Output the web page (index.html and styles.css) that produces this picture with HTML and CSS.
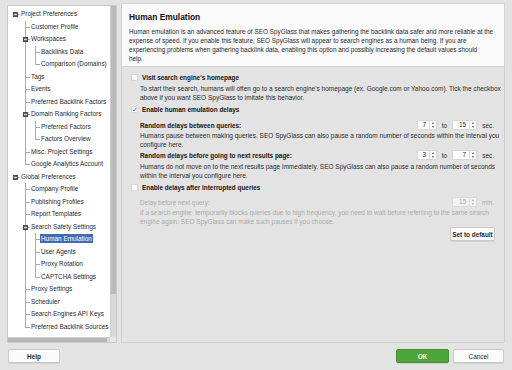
FILE: index.html
```html
<!DOCTYPE html>
<html>
<head>
  <meta charset="utf-8">
  <title>Preferences - Human Emulation</title>
  <link rel="stylesheet" href="styles.css">
</head>
<body>
  <div class="dialog">
    <div class="main">
      <div class="tree-panel">
        <div class="tree">
          <ul>
            <li><span class="exp"></span><div class="row">Project Preferences</div>
              <ul>
                <li><div class="row">Customer Profile</div></li>
                <li><span class="exp"></span><div class="row">Workspaces</div>
                  <ul>
                    <li><div class="row">Backlinks Data</div></li>
                    <li><div class="row">Comparison (Domains)</div></li>
                  </ul>
                </li>
                <li><div class="row">Tags</div></li>
                <li><div class="row">Events</div></li>
                <li><div class="row">Preferred Backlink Factors</div></li>
                <li><span class="exp"></span><div class="row">Domain Ranking Factors</div>
                  <ul>
                    <li><div class="row">Preferred Factors</div></li>
                    <li><div class="row">Factors Overview</div></li>
                  </ul>
                </li>
                <li><div class="row">Misc. Project Settings</div></li>
                <li><div class="row">Google Analytics Account</div></li>
              </ul>
            </li>
            <li><span class="exp"></span><div class="row">Global Preferences</div>
              <ul>
                <li><div class="row">Company Profile</div></li>
                <li><div class="row">Publishing Profiles</div></li>
                <li><div class="row">Report Templates</div></li>
                <li><span class="exp"></span><div class="row">Search Safety Settings</div>
                  <ul>
                    <li><div class="row"><span class="selected">Human Emulation</span></div></li>
                    <li><div class="row">User Agents</div></li>
                    <li><div class="row">Proxy Rotation</div></li>
                    <li><div class="row">CAPTCHA Settings</div></li>
                  </ul>
                </li>
                <li><div class="row">Proxy Settings</div></li>
                <li><div class="row">Scheduler</div></li>
                <li><div class="row">Search Engines API Keys</div></li>
                <li><div class="row">Preferred Backlink Sources</div></li>
              </ul>
            </li>
          </ul>
        </div>
        <div class="vscroll"><div class="thumb"></div></div>
        <div class="hscroll"><div class="thumb"></div></div>
        <div class="corner"></div>
      </div>

      <div class="page">
        <div class="page-header">
          <h1>Human Emulation</h1>
          <p>Human emulation is an advanced feature of SEO SpyGlass that makes gathering the backlink data safer and more reliable at the<br>
          expense of speed. If you enable this feature, SEO SpyGlass will appear to search engines as a human being. If you are<br>
          experiencing problems when gathering backlink data, enabling this option and possibly increasing the default values should<br>
          help.</p>
        </div>
        <div class="page-body">
          <label class="check"><span class="box"></span>Visit search engine's homepage</label>
          <p class="hint hint-1">To start their search, humans will often go to a search engine's homepage (ex. Google.com or Yahoo.com). Tick the checkbox<br>
          above if you want SEO SpyGlass to imitate this behavior.</p>

          <label class="check check-2"><span class="box checked"><svg width="7" height="7" viewBox="0 0 7 7"><path d="M1 3.6 L2.8 5.4 L6.2 1.2" fill="none" stroke="#3c6db4" stroke-width="1.3"/></svg></span>Enable human emulation delays</label>

          <div class="setting setting-1">
            <span class="setting-label">Random delays between queries:</span>
            <span class="spin spin-sm"><span class="val">7</span><span class="arrows"><i class="up"></i><i class="down"></i></span></span>
            <span class="to">to</span>
            <span class="spin"><span class="val">15</span><span class="arrows"><i class="up"></i><i class="down"></i></span></span>
            <span class="unit">sec.</span>
          </div>
          <p class="hint hint-2">Humans pause between making queries. SEO SpyGlass can also pause a random number of seconds within the interval you<br>
          configure here.</p>

          <div class="setting setting-2">
            <span class="setting-label">Random delays before going to next results page:</span>
            <span class="spin spin-sm"><span class="val">3</span><span class="arrows"><i class="up"></i><i class="down"></i></span></span>
            <span class="to">to</span>
            <span class="spin"><span class="val">7</span><span class="arrows"><i class="up"></i><i class="down"></i></span></span>
            <span class="unit">sec.</span>
          </div>
          <p class="hint hint-3">Humans do not move on to the next results page immediately. SEO SpyGlass can also pause a random number of seconds<br>
          within the interval you configure here.</p>

          <label class="check check-3"><span class="box"></span>Enable delays after interrupted queries</label>

          <div class="setting setting-3 disabled">
            <span class="setting-label">Delay before next query:</span>
            <span class="spin"><span class="val">15</span><span class="arrows"><i class="up"></i><i class="down"></i></span></span>
            <span class="unit">min.</span>
          </div>
          <p class="hint hint-4 disabled">If a search engine &nbsp;temporarily blocks queries due to high frequency, you need to wait before referring to the same search<br>
          engine again. SEO SpyGlass can make such pauses if you choose.</p>

          <div class="actions">
            <button class="btn btn-default">Set to default</button>
          </div>
        </div>
      </div>
    </div>

    <div class="footer">
      <button class="btn btn-help">Help</button>
      <button class="btn btn-ok">OK</button>
      <button class="btn btn-cancel">Cancel</button>
    </div>
  </div>
</body>
</html>
```

FILE: styles.css
```css
html, body {
  margin: 0;
  width: 512px;
  height: 370px;
  overflow: hidden;
}
body {
  background: #e3e3e3;
  font-family: "Liberation Sans", Arial, sans-serif;
  font-size: 6.4px;
  color: #2a2a2a;
}

.dialog {
  display: flex;
  flex-direction: column;
  height: 370px;
}

.main {
  display: flex;
  padding: 3px 7px 0 7px;
  height: 340px;
}

/* left tree */
.tree-panel {
  margin-top: 2px;
  width: 108px;
  height: 336px;
  border: 1px solid #c9c9c9;
  background: #fff;
  display: grid;
  grid-template-columns: 1fr 6px;
  grid-template-rows: 1fr 5px;
}

.tree {
  overflow: hidden;
  padding: 2px 0 0 13px;
}
.tree ul {
  list-style: none;
  margin: 0;
  padding: 0;
}
.tree ul ul {
  padding-left: 10px;
}
.tree li {
  position: relative;
}
.tree .row {
  height: 12.5px;
  line-height: 12.5px;
  white-space: nowrap;
  position: relative;
}
.tree li:before {
  content: "";
  position: absolute;
  left: -6px;
  top: 6px;
  width: 5px;
  height: 1px;
  background: #a9a9a9;
}
.tree ul ul > li:after {
  content: "";
  position: absolute;
  left: -6px;
  top: 0;
  bottom: 0;
  width: 1px;
  background: #a9a9a9;
}
.tree ul ul > li:last-child:after {
  bottom: auto;
  height: 6.5px;
}
.tree .exp {
  position: absolute;
  z-index: 2;
  left: -8px;
  top: 4px;
  width: 5px;
  height: 5px;
  box-sizing: border-box;
  background: #6b6b6b;
  border: 1px solid #4a4a4a;
}
.tree .exp:after {
  content: "";
  position: absolute;
  left: 0;
  top: 1px;
  width: 3px;
  height: 1px;
  background: #d8d8d8;
}
.tree .selected {
  background: #3f6db3;
  color: #fff;
  padding: 1px 1px;
  margin-left: -1px;
}

.vscroll {
  background: #d9d9d9;
  border-left: 1px solid #cfcfcf;
}
.vscroll .thumb {
  height: 288px;
  background: #b9b9b9;
}
.hscroll {
  background: #d9d9d9;
  border-top: 1px solid #cfcfcf;
}
.hscroll .thumb {
  width: 99px;
  height: 100%;
  background: #b7b7b7;
}
.corner {
  background: #e8e8e8;
}

/* right page */
.page {
  margin-left: 4px;
  width: 384px;
  display: flex;
  flex-direction: column;
}

.page-header {
  background: #fafafa;
  border: 1px solid #d3d3d3;
  padding: 8px 7px 3px 7px;
}
.page-header h1 {
  margin: 0 0 4px 0;
  font-size: 8.4px;
  line-height: 11px;
  font-weight: bold;
  color: #111;
}
.page-header p {
  margin: 0;
  line-height: 9px;
  white-space: nowrap;
}

.page-body {
  flex: 1;
  border: 1px solid #d0d0d0;
  border-top: none;
  padding: 5px 9px 0 9px;
}

.check {
  display: flex;
  align-items: center;
  height: 10px;
  font-weight: bold;
  color: #151515;
}
.check .box {
  width: 7px;
  height: 7px;
  box-sizing: border-box;
  background: #fff;
  border: 1px solid #d6d6d6;
  margin-right: 4px;
  display: flex;
  align-items: center;
  justify-content: center;
}
.check .box.checked {
  border-color: #dcdcdc;
  background: #f4f4f4;
}
.check .box svg {
  display: block;
}

.hint {
  margin: 0;
  padding-left: 9px;
  font-size: 6.5px;
  line-height: 8.5px;
  white-space: nowrap;
}
.hint-1 { margin-top: 3px; }
.check-2 { margin-top: 2px; }
.hint-2 { margin-top: 1px; }
.hint-3 { margin-top: 2px; }
.check-3 { margin-top: 2px; }
.hint-4 { margin-top: 1px; }

.setting {
  display: flex;
  align-items: center;
  height: 12px;
  padding-left: 9px;
}
.setting-1 { margin-top: 5px; }
.setting-2 { margin-top: 0; }
.setting-3 { margin-top: 4px; }
.setting-label {
  flex: 1;
  font-weight: bold;
  color: #151515;
}

.spin {
  display: flex;
  width: 25px;
  height: 10px;
  box-sizing: border-box;
  background: #fff;
  border: 1px solid #d8d8d8;
}
.spin-sm {
  width: 20px;
}
.spin .val {
  flex: 1;
  text-align: right;
  line-height: 8px;
  padding-right: 3px;
}
.spin .arrows {
  width: 6px;
  border-left: 1px solid #dedede;
  display: flex;
  flex-direction: column;
  align-items: center;
  justify-content: space-around;
}
.spin i {
  width: 0;
  height: 0;
  border-left: 1.5px solid transparent;
  border-right: 1.5px solid transparent;
}
.spin i.up {
  border-bottom: 2px solid #555;
}
.spin i.down {
  border-top: 2px solid #555;
}
.to {
  width: 15px;
  text-align: center;
}
.unit {
  width: 17px;
  margin-left: 0;
  text-align: right;
  padding-right: 1px;
}

.disabled,
.disabled .setting-label {
  color: #ababab;
  font-weight: normal;
}
.disabled .spin {
  background: #f2f2f2;
  border-color: #dadada;
}
.disabled .spin i.up { border-bottom-color: #aaa; }
.disabled .spin i.down { border-top-color: #aaa; }

.actions {
  display: flex;
  justify-content: flex-end;
  margin-top: 1px;
}

.btn {
  font-family: inherit;
  font-size: 6.4px;
  height: 14px;
  padding: 0 3px;
  border: 1px solid #c9c9c9;
  border-radius: 2px;
  background: #fbfbfb;
  color: #2b2b2b;
  font-weight: bold;
  box-shadow: 0 1px 0 #d0d0d0;
}
.btn-default {
  width: 45px;
  padding: 0;
}

/* footer buttons */
.footer {
  display: flex;
  align-items: center;
  padding: 6px 8px 0 8px;
}
.btn-help {
  width: 52px;
}
.btn-ok {
  margin-left: auto;
  width: 53px;
  background: #4ea63b;
  border-color: #3f9430;
  color: #fff;
}
.btn-cancel {
  margin-left: 4px;
  width: 51px;
  font-weight: normal;
}
```
